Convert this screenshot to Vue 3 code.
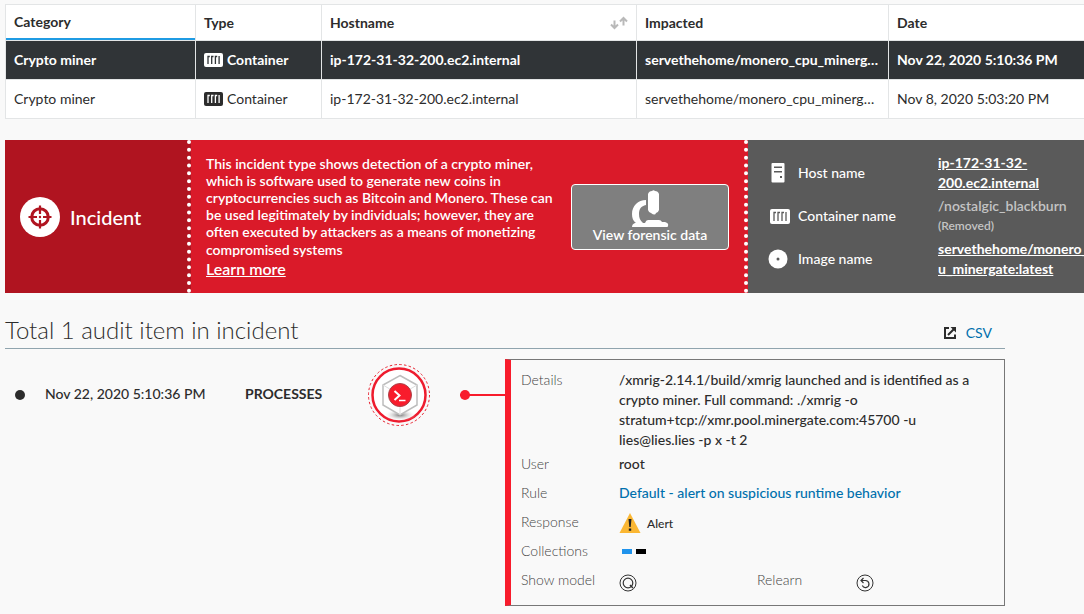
<script setup>
import { ref } from 'vue'

const selected = ref(0)

const incidents = [
  { category: 'Crypto miner', type: 'Container', host: 'ip-172-31-32-200.ec2.internal', impacted: 'servethehome/monero_cpu_minergate:latest', date: 'Nov 22, 2020 5:10:36 PM' },
  { category: 'Crypto miner', type: 'Container', host: 'ip-172-31-32-200.ec2.internal', impacted: 'servethehome/monero_cpu_minergate:latest', date: 'Nov 8, 2020 5:03:20 PM' }
]
</script>

<template>
  <main class="page">
    <table class="incidents">
      <colgroup>
        <col class="col-category" />
        <col class="col-type" />
        <col class="col-host" />
        <col class="col-impacted" />
        <col />
      </colgroup>
      <thead>
        <tr>
          <th class="sorted">Category</th>
          <th>Type</th>
          <th>
            <div class="sortable">
              Hostname
              <svg width="18" height="14" viewBox="0 0 18 14" fill="none" stroke="#b9b9b9" stroke-width="2">
                <path d="M4.500 4.500V12M1 8.500l3.500 3.500L8 8.500M13.500 9.500V2M10 5.500L13.500 2L17 5.500" />
              </svg>
            </div>
          </th>
          <th>Impacted</th>
          <th>Date</th>
        </tr>
      </thead>
      <tbody>
        <tr v-for="(item, i) in incidents" :key="i" :class="{ selected: i === selected }" @click="selected = i">
          <td>{{ item.category }}</td>
          <td>
            <span class="type">
              <svg width="19" height="14" viewBox="0 0 19 14">
                <rect width="19" height="14" rx="2" fill="currentColor" />
                <path class="slots" d="M4 11V3.500h1.800M7.700 11V3.500h1.800M11.400 11V3.500h1.800M15.100 11V3" />
              </svg>
              {{ item.type }}
            </span>
          </td>
          <td>{{ item.host }}</td>
          <td>{{ item.impacted }}</td>
          <td>{{ item.date }}</td>
        </tr>
      </tbody>
    </table>

    <section class="banner">
      <div class="kind">
        <svg width="40" height="40" viewBox="0 0 40 40">
          <circle cx="20" cy="20" r="20" fill="#fff" />
          <g fill="none" stroke="#b01420">
            <circle cx="20" cy="20" r="8.300" stroke-width="3" />
            <path stroke-width="2.200" d="M20 8.500v8.500M20 23v8.500M8.500 20H17M23 20h8.500" />
          </g>
          <circle cx="20" cy="20" r="1.200" fill="#b01420" />
        </svg>
        <h2>Incident</h2>
      </div>

      <div class="about">
        <div class="about-text">
          <p>
            This incident type shows detection of a crypto miner, which is software used to generate new coins in
            cryptocurrencies such as Bitcoin and Monero. These can be used legitimately by individuals; however, they are
            often executed by attackers as a means of monetizing <span class="last">compromised systems</span>
          </p>
          <a href="#learn">Learn more</a>
        </div>
        <button type="button" class="forensic">
          <svg width="38" height="38" viewBox="0 0 38 38" fill="#fff">
            <path d="M17 4q1-3 4-3 1.500-1.500 3 0 3 0 4 3v16q-1 3-3 3-1 3-5 0-2 0-3-3z" />
            <path d="M15 10v5C10 16 8 19 8 24c0 4 1 6 4 9H5C2 31 1 28 1 24 1 16 7 10 15 10z" />
            <path d="M1 37q0-3 3-4h10q1-3 3-3h11q2 0 3 2h3q4 1 3 4 0 1-1 1z" />
          </svg>
          View forensic data
        </button>
      </div>

      <dl class="facts">
        <div class="fact">
          <dt>
            <svg width="20" height="20" viewBox="0 0 20 20">
              <rect x="3.500" width="13" height="19.500" rx="1" fill="#fff" />
              <path d="M6 4.200h8M6 8.700h8" stroke="#5a5a5a" stroke-width="1.500" />
              <rect x="12" y="13" width="2" height="2" fill="#5a5a5a" />
            </svg>
            Host name
          </dt>
          <dd><a href="#host">ip-172-31-32-200.ec2.internal</a></dd>
        </div>
        <div class="fact">
          <dt>
            <svg class="container-icon" width="20" height="15" viewBox="0 0 20 15">
              <rect width="20" height="15" rx="2" fill="#fff" />
              <path d="M4 12V3.500h2M8 12V3.500h2M12 12V3.500h2M16 12V3" fill="none" stroke="#5a5a5a" stroke-width="1.300" />
            </svg>
            Container name
          </dt>
          <dd class="muted">/nostalgic_blackburn <small>(Removed)</small></dd>
        </div>
        <div class="fact">
          <dt>
            <svg width="20" height="20" viewBox="0 0 20 20">
              <circle cx="10" cy="10" r="9.500" fill="#fff" />
              <circle cx="10" cy="10" r="1.500" fill="#5a5a5a" />
            </svg>
            Image name
          </dt>
          <dd><a href="#image">servethehome/monero_cpu_minergate:latest</a></dd>
        </div>
      </dl>
    </section>

    <section class="audit">
      <header class="audit-head">
        <h1>Total 1 audit item in incident</h1>
        <a href="#csv">
          <svg width="12" height="12" viewBox="0 0 12 12" fill="none" stroke="#2c2c2c" stroke-width="2">
            <path d="M5 1H1v10h10V7.500M4 8l6-6" />
            <path d="M6.500 0H12v5.500z" fill="#2c2c2c" stroke="none" />
          </svg>
          CSV
        </a>
      </header>

      <article class="event">
        <div class="marker">
          <span class="bullet"></span>
          <time datetime="2020-11-22T17:10:36">Nov 22, 2020 5:10:36 PM</time>
          <strong>PROCESSES</strong>
          <svg class="badge" width="64" height="64" viewBox="0 0 64 64">
            <defs>
              <radialGradient id="shade">
                <stop offset="0" stop-color="#777" />
                <stop offset="1" stop-color="#fff" stop-opacity="0" />
              </radialGradient>
            </defs>
            <circle cx="32" cy="32" r="30.500" fill="none" stroke="#e8202e" stroke-dasharray="2.500 2.290" />
            <circle cx="32" cy="32" r="26.500" fill="#fff" stroke="#ee1c2e" stroke-width="2.500" />
            <ellipse cx="33" cy="52" rx="16" ry="6" fill="url(#shade)" />
            <path d="M33 12.500l17 9.500v20l-17 10-17-10V22z" fill="#fff" stroke="#bdbdbd" stroke-width="1.500" />
            <path d="M16 22l17 10 17-10M33 32v20" fill="none" stroke="#ddd" />
            <circle cx="33" cy="32" r="11.500" fill="#f81c2c" stroke="#a8444a" />
            <path d="M27.500 28l5 4.500-5 4.500" fill="none" stroke="#fff" stroke-width="2" />
            <path d="M32 37.500h6.500" stroke="#fff" stroke-width="1.500" />
          </svg>
          <span class="connector"></span>
        </div>

        <dl class="card">
          <dt class="lines">Details</dt>
          <dd class="lines wide">
            /xmrig-2.14.1/build/xmrig launched and is identified as a crypto miner. Full command: ./xmrig -o
            stratum+tcp://xmr.pool.minergate.com:45700 -u lies@lies.lies -p x -t 2
          </dd>
          <dt>User</dt>
          <dd class="wide">root</dd>
          <dt>Rule</dt>
          <dd class="wide"><a href="#rule">Default - alert on suspicious runtime behavior</a></dd>
          <dt>Response</dt>
          <dd class="wide response">
            <svg width="22" height="20" viewBox="0 0 22 20">
              <path d="M11 0l10.500 20H.5z" fill="#fbb733" />
              <path d="M9.500 6h3l-.8 8h-1.400zM9.800 15.500h2.400v2.300H9.800z" fill="#222" />
            </svg>
            Alert
          </dd>
          <dt>Collections</dt>
          <dd class="wide collections"><i class="blue"></i><i></i></dd>
          <dt>Show model</dt>
          <dd>
            <button type="button" class="round" aria-label="Show model">
              <svg width="18" height="18" viewBox="0 0 18 18" fill="none" stroke="#333">
                <circle cx="9" cy="9" r="8" />
                <circle cx="9" cy="9" r="4.800" stroke-width="1.200" />
                <path d="M11 11l3 3" stroke-width="1.500" />
              </svg>
            </button>
          </dd>
          <dt>Relearn</dt>
          <dd>
            <button type="button" class="round" aria-label="Relearn">
              <svg width="18" height="18" viewBox="0 0 18 18" fill="none" stroke="#333">
                <circle cx="9" cy="9" r="8" />
                <path d="M5 6.500h4.500a3.500 3.500 0 1 1-3.200 5M7.500 4L5 6.500 7.500 9" stroke-width="1.200" />
              </svg>
            </button>
          </dd>
        </dl>
      </article>
    </section>
  </main>
</template>

<style>
body {
  margin: 0;
  background: #f9f9f9;
  overflow-x: hidden;
}
</style>

<style scoped>
.page {
  padding: 4px 0 8px 5px;
  font: 14px/20px Lato, "Open Sans", sans-serif;
  color: #2c2c2c;
}

h1, h2, p, dl, dd {
  margin: 0;
}

svg {
  flex: none;
  display: block;
}

button {
  font: inherit;
  color: inherit;
  cursor: pointer;
}

.incidents {
  width: 100%;
  table-layout: fixed;
  border-collapse: collapse;
  background: #fff;
}

.col-category { width: 190px; }
.col-type { width: 126px; }
.col-host { width: 315px; }
.col-impacted { width: 252px; }

.incidents th,
.incidents td {
  height: 39px;
  padding: 0 8px;
  border: 1px solid #e3e5e6;
  text-align: left;
  overflow: hidden;
  white-space: nowrap;
  text-overflow: ellipsis;
  box-sizing: border-box;
}

.incidents th {
  height: 36px;
  font-weight: 700;
}

.incidents th:last-child,
.incidents td:last-child {
  border-right: 0;
}

.incidents .sorted {
  padding-bottom: 2px;
  box-shadow: inset 0 -2px #1f9be3;
}

.sortable {
  display: flex;
  align-items: center;
  justify-content: space-between;
}

.type {
  display: flex;
  align-items: center;
  gap: 4px;
}

.slots {
  fill: none;
  stroke: #fff;
  stroke-width: 1.300;
}

.selected {
  background: #303437;
  color: #fff;
  font-weight: 700;
}

.selected .slots {
  stroke: #303437;
}

.banner {
  display: grid;
  grid-template-columns: 186px 557px minmax(0, 1fr);
  min-height: 153px;
  margin-top: 21px;
  color: #fff;
}

.kind {
  display: flex;
  align-items: center;
  gap: 10px;
  padding-left: 15px;
  background: #b01420;
  border-right: 4px dotted #fff;
}

.kind h2 {
  font-size: 20px;
  line-height: 24px;
  font-weight: 500;
}

.about {
  display: flex;
  align-items: center;
  gap: 15px;
  padding: 0 15px;
  background: #da1a29;
  border-right: 4px dotted #fff;
}

.about-text {
  flex: 1;
  font-weight: 600;
}

.about-text p {
  line-height: 17px;
}

.last {
  line-height: 20px;
}

.about-text a {
  display: block;
  color: #fff;
  font-size: 16px;
  line-height: 18px;
}

.forensic {
  display: flex;
  flex-direction: column;
  align-items: center;
  width: 158px;
  padding: 5px 0 7px;
  border: 1px solid #fff;
  border-radius: 4px;
  background: #7f7f7f;
  font-weight: 600;
  line-height: 14px;
}

.facts {
  display: flex;
  flex-direction: column;
  justify-content: center;
  gap: 3px;
  padding: 0 0 1px 20px;
  background: #5a5a5a;
  overflow: hidden;
}

.fact {
  display: flex;
  align-items: center;
}

.fact dt {
  flex: none;
  display: flex;
  align-items: center;
  gap: 10px;
  width: 170px;
  font-weight: 500;
}

.container-icon {
  margin: 0 -2px 0 2px;
}

.fact dd {
  flex: none;
  width: 168px;
  font-weight: 700;
  overflow-wrap: anywhere;
}

.fact:first-child dd {
  width: 146px;
}

.fact a {
  color: #fff;
}

.fact .muted {
  color: #c4c4c4;
  font-weight: 600;
}

.muted small {
  display: block;
  font-size: 12px;
}

.audit {
  max-width: 1000px;
  margin-top: 20px;
}

.audit-head {
  display: flex;
  align-items: center;
  justify-content: space-between;
  height: 35px;
  border-bottom: 1px solid #90a4ae;
}

.audit-head h1 {
  padding-bottom: 2px;
  font-size: 24px;
  line-height: 28px;
  font-weight: 300;
}

.audit a {
  color: #0070ad;
  text-decoration: none;
}

.audit-head a {
  display: flex;
  align-items: center;
  gap: 10px;
  padding: 5px 13px 0 0;
}

.event {
  display: grid;
  grid-template-columns: minmax(0, 1fr) 500px;
  margin-top: 10px;
}

.marker {
  display: grid;
  grid-template-columns: 40px 200px 122px 93px 1fr;
  align-items: center;
  align-self: start;
  padding-top: 4px;
}

.marker time,
.marker strong {
  padding-bottom: 2px;
  font-weight: 500;
}

.marker strong {
  font-weight: 700;
}

.bullet {
  width: 10px;
  height: 10px;
  margin-left: 10px;
  border-radius: 50%;
  background: #2c2c2c;
}

.connector {
  display: flex;
  align-items: center;
  height: 2px;
  background: #f81c2c;
}

.connector::before {
  content: "";
  width: 10px;
  height: 10px;
  border-radius: 50%;
  background: #f81c2c;
}

.card {
  display: grid;
  grid-template-columns: 98px 138px 99px 1fr;
  padding: 10px 20px 10px 10px;
  border: 1px solid #777;
  border-left: 6px solid #f81c2c;
}

.card dt,
.card dd {
  padding-bottom: 2px;
  line-height: 27px;
}

.card dt {
  color: #444;
  font-weight: 300;
}

.card dd {
  font-weight: 500;
}

.card .lines {
  padding: 0;
  line-height: 20px;
}

.wide {
  grid-column: 2 / -1;
}

.card .response {
  display: flex;
  align-items: center;
  gap: 6px;
  padding: 1px 0 0;
  font-size: 12px;
}

.card .collections {
  display: flex;
  align-items: center;
  gap: 4px;
  padding: 0 0 0 3px;
}

.collections i {
  width: 10px;
  height: 5px;
  background: #000;
}

.collections .blue {
  background: #1f93ec;
}

.card .round {
  display: block;
  margin-top: 8px;
  padding: 0;
  border: 0;
  background: none;
}
</style>
